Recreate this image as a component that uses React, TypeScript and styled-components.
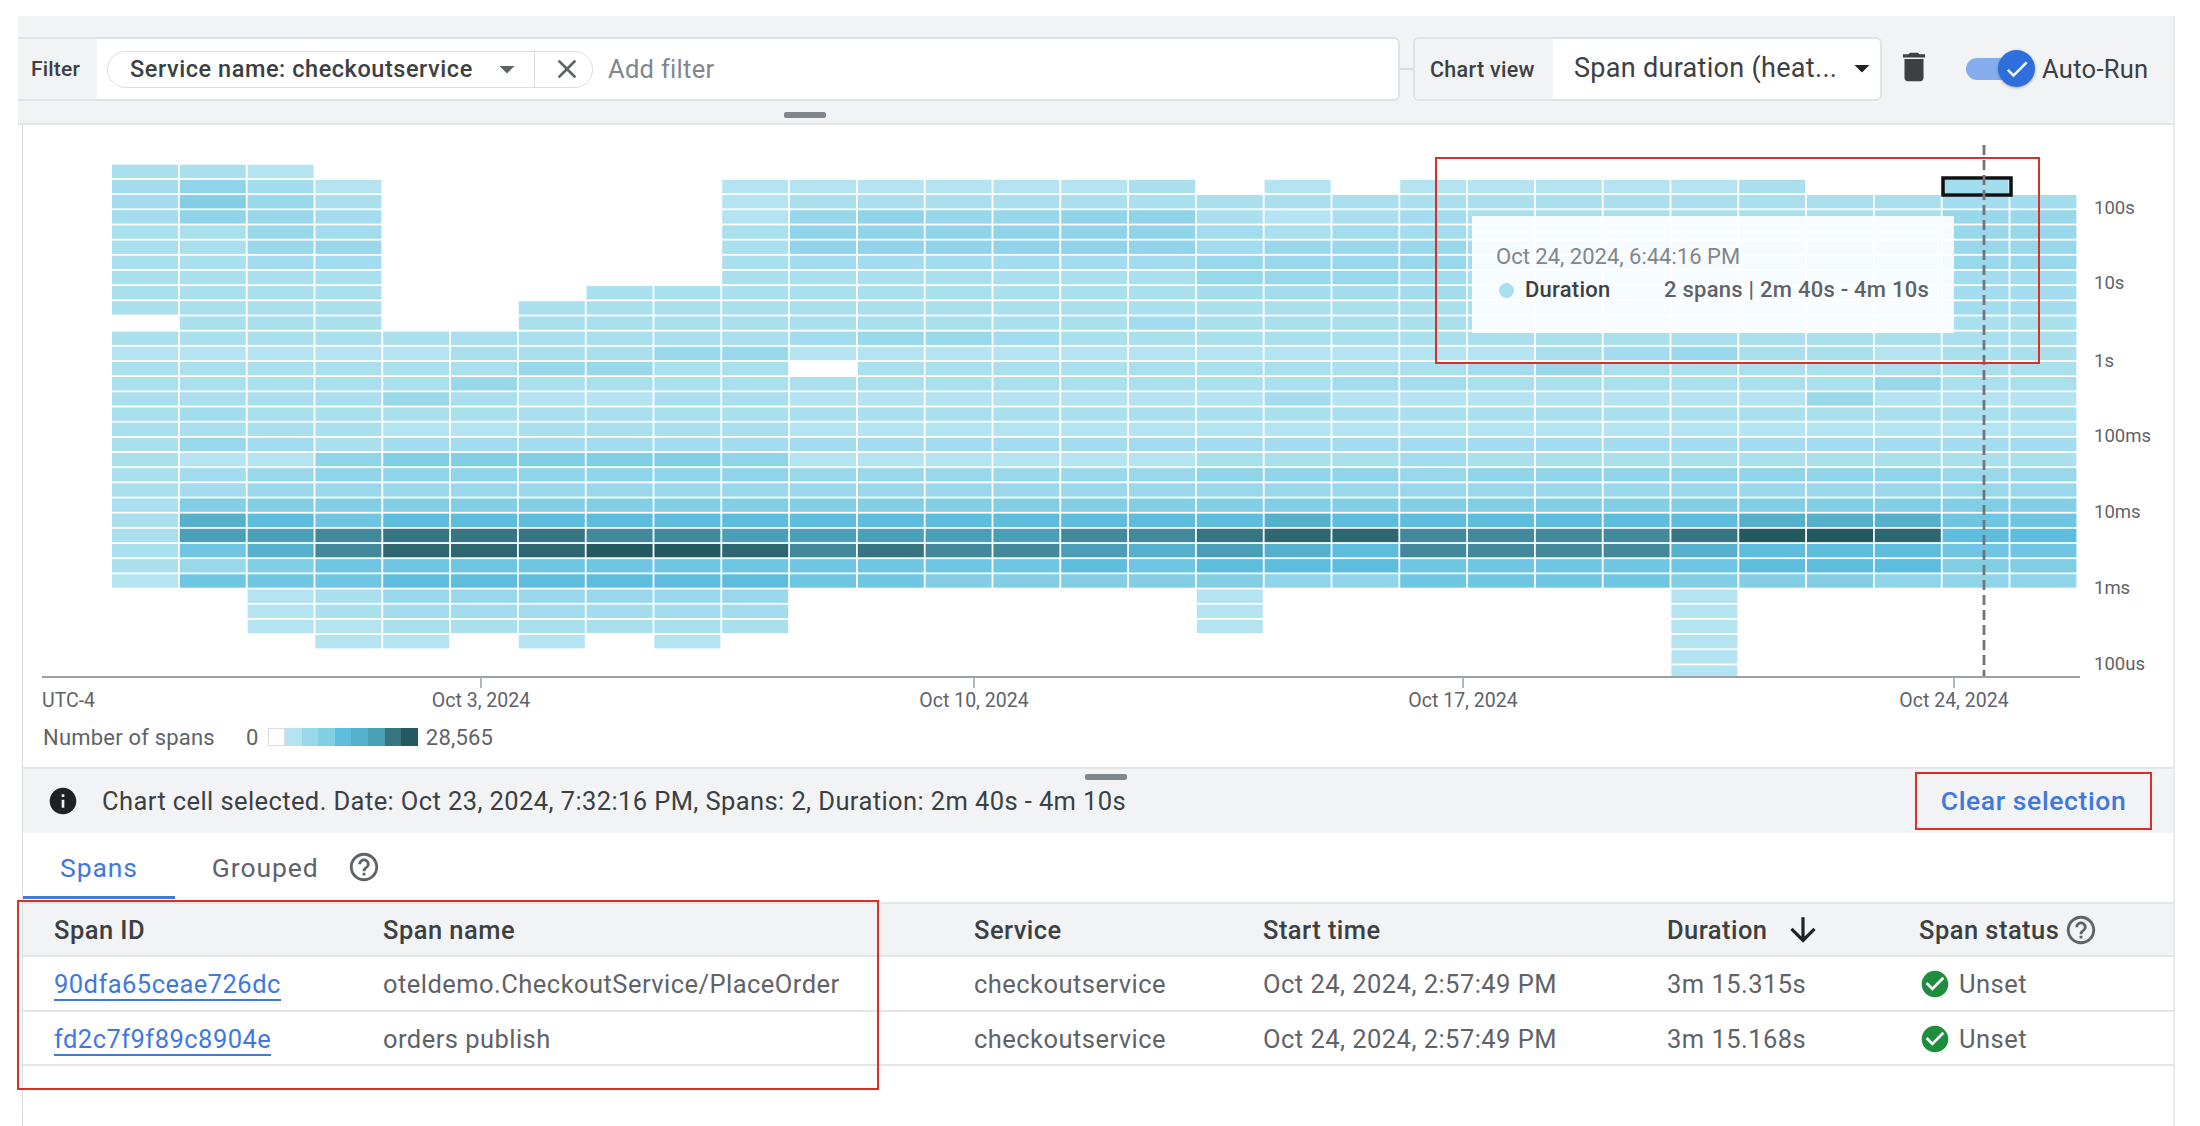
import React from 'react'
import styled, { createGlobalStyle } from 'styled-components'
import {
  MdArrowDownward,
  MdArrowDropDown,
  MdCheck,
  MdCheckCircle,
  MdClose,
  MdDelete,
  MdHelpOutline,
  MdInfo,
} from 'react-icons/md'

const GlobalStyle = createGlobalStyle`
  html, body {
    margin: 0;
    background: #fff;
    overflow: hidden;
  }
  body {
    font-family: Roboto, "Liberation Sans", sans-serif;
    color: #3c4043;
  }
`

const LEVELS = [
  '#b4e3f1', '#aadfee', '#a3dcee', '#99d8eb', '#8fd4e8', '#81cee5', '#6fc6e2',
  '#5ebcdc', '#55b0cc', '#4a9fb6', '#43899c', '#387582', '#2e6772', '#245962',
]

// one string per duration bucket, one char per time bucket, '.' = no spans
// groups are columns 0-9, 10-19, 20-28
const ROWS = [
  '110....... .......... .........',
  '2420.....0 000001.0.0 00001..2.',
  '2531.....0 1111111111 111111122',
  '2432.....0 3433441012 111111133',
  '1132.....1 4444442122 111111133',
  '1133.....1 4444442333 222222233',
  '1122.....1 2222223333 222222233',
  '1111.....1 1111113332 111111122',
  '1111...111 1111112222 111111122',
  '1111..1111 1111111111 111111122',
  '.111..1111 1111121111 111111111',
  '1111111111 2332111111 111111111',
  '0000011133 0000000000 012311011',
  '1111113311 .111111111 231111111',
  '1111131111 1111111122 111111311',
  '1111310011 0000000200 000003000',
  '1211111111 1111111111 111111111',
  '1111001111 0000000000 000000000',
  '1321222222 2222222222 222222222',
  '1004555554 0000001112 111111111',
  '1234444444 3333334443 444444433',
  '1233333333 3333333333 333333333',
  '1555555555 5555555555 555555555',
  '1876777777 7777777877 777788866',
  '199abbbaa9 9999aabcca aaabddc77',
  '168acccddc abaa98987a aaa877766',
  '1356666666 6666767776 666677755',
  '0666777777 6655555446 666555444',
  '..01333333 ......0... ...0.....',
  '..01222222 ......0... ...0.....',
  '..00111111 ......0... ...0.....',
  '...00.0.0. .......... ...0.....',
  '.......... .......... ...0.....',
  '.......... .......... ...0.....',
].map(r => r.replace(/ /g, ''))

const COL_X = 112
const COL_PITCH = 67.8
const ROW_Y = 164.7
const ROW_PITCH = 15.17
const AXIS_Y = 677

const X_TICKS = [
  { x: 481, label: 'Oct 3, 2024' },
  { x: 974, label: 'Oct 10, 2024' },
  { x: 1463, label: 'Oct 17, 2024' },
  { x: 1954, label: 'Oct 24, 2024' },
]
const Y_LABELS = [
  { y: 208, label: '100s' },
  { y: 283, label: '10s' },
  { y: 361, label: '1s' },
  { y: 436, label: '100ms' },
  { y: 512, label: '10ms' },
  { y: 588, label: '1ms' },
  { y: 664, label: '100us' },
]
const LEGEND = ['#fff', '#b4e3f1', '#99d8eb', '#81cee5', '#5ebcdc', '#55b0cc', '#4a9fb6', '#387582', '#245962']

const Page = styled.div`
  width: 2175px;
  height: 1126px;
  padding: 16px 0 0 18px;
  box-sizing: border-box;
  display: flex;
  flex-direction: column;
`

const Toolbar = styled.header`
  height: 109px;
  box-sizing: border-box;
  flex: none;
  background: #f1f3f4;
  border-bottom: 2px solid #e3e5e8;
  border-right: 2px solid #e8eaed;
  padding-top: 21px;
  position: relative;
  display: flex;
  align-items: flex-start;
`

const FilterField = styled.div`
  width: 1382px;
  height: 64px;
  box-sizing: border-box;
  flex: none;
  display: flex;
  align-items: center;
  background: #fff;
  border: solid #e0e2e5;
  border-width: 2px 2px 2px 0;
  border-radius: 0 6px 6px 0;
`

const FieldLabel = styled.div`
  align-self: stretch;
  flex: none;
  display: flex;
  align-items: center;
  box-sizing: border-box;
  background: #f1f3f4;
  font-size: 21px;
  font-weight: 500;
  letter-spacing: 0.2px;
  color: #3c4043;
`

const FilterLabel = styled(FieldLabel)`
  width: 79px;
  padding-left: 13px;
`

const Chip = styled.div`
  margin-left: 10px;
  width: 486px;
  height: 37px;
  box-sizing: border-box;
  flex: none;
  display: flex;
  align-items: center;
  border: 1.5px solid #dadce0;
  border-radius: 19px;
`

const ChipText = styled.span`
  flex: 1;
  padding: 0 9px 0 22px;
  height: 100%;
  display: flex;
  align-items: center;
  justify-content: space-between;
  font-size: 23.5px;
  font-weight: 500;
  letter-spacing: 0.55px;
  color: #3c4043;
  white-space: nowrap;
  border-right: 1.5px solid #dadce0;
`

const ChipClose = styled.span`
  width: 57px;
  padding-left: 6px;
  box-sizing: border-box;
  display: flex;
  justify-content: center;
  color: #5f6368;
`

const AddFilter = styled.span`
  margin-left: 15px;
  font-size: 25.5px;
  letter-spacing: 0.3px;
  color: #80868b;
`

const Connector = styled.div`
  width: 13px;
  height: 2px;
  flex: none;
  margin-top: 31px;
  background: #dadce0;
`

const ChartViewField = styled.div`
  width: 469px;
  height: 64px;
  box-sizing: border-box;
  flex: none;
  display: flex;
  background: #fff;
  border: 2px solid #e0e2e5;
  border-radius: 6px;
  overflow: hidden;
`

const ChartViewLabel = styled(FieldLabel)`
  width: 138px;
  padding-left: 15px;
  font-size: 21.5px;
  letter-spacing: 0.3px;
`

const ChartViewSelect = styled.div`
  flex: 1;
  display: flex;
  align-items: center;
  justify-content: space-between;
  padding: 0 0 2px 21px;
  font-size: 27px;
  letter-spacing: 0.3px;
  color: #3c4043;
  white-space: nowrap;
`

const TrashButton = styled.div`
  flex: none;
  margin: 11px 0 0 13px;
  color: #3c4043;
  display: flex;
`

const AutoRun = styled.div`
  flex: none;
  height: 64px;
  margin-left: 33px;
  display: flex;
  align-items: center;
  font-size: 25.5px;
  letter-spacing: 0.3px;
  color: #3c4043;
`

const ToggleTrack = styled.div`
  position: relative;
  width: 48px;
  height: 22px;
  border-radius: 11px 0 0 11px;
  background: #86aeee;
  margin-right: 28px;
`

const ToggleKnob = styled.div`
  position: absolute;
  left: 32px;
  top: -8px;
  width: 37px;
  height: 37px;
  border-radius: 50%;
  background: #2f6fdd;
  color: #fff;
  display: flex;
  align-items: center;
  justify-content: center;
  box-shadow: 0 1px 3px rgba(60, 64, 67, 0.4);
`

const Handle = styled.div`
  position: absolute;
  width: 42px;
  height: 6px;
  border-radius: 2px;
  background: #80868b;
`

const ToolbarHandle = styled(Handle)`
  left: 766px;
  bottom: 5px;
`

const Body = styled.main`
  flex: 1;
  margin-left: 4px;
  border-left: 1px solid #dadce0;
  border-right: 2px solid #e8eaed;
  display: flex;
  flex-direction: column;
  min-height: 0;
`

const ChartArea = styled.section`
  position: relative;
  flex: none;
  height: 642px;
`

const ChartSvg = styled.svg`
  display: block;
  font-family: Roboto, "Liberation Sans", sans-serif;
`

const Cells = styled.g`
  filter: blur(0.45px);
`

const Legend = styled.div`
  height: 46px;
  padding-left: 20px;
  display: flex;
  align-items: center;
  font-size: 22px;
  letter-spacing: 0.2px;
  color: #5f6368;
`

const LegendZero = styled.span`
  margin: 0 10px 0 31px;
`

const LegendScale = styled.div`
  display: flex;
  margin-right: 8px;
`

const LegendSwatch = styled.div<{ $color: string }>`
  width: 16.6px;
  height: 18px;
  box-sizing: border-box;
  background: ${p => p.$color};
  border: ${p => (p.$color === '#fff' ? '1px solid #dadce0' : 'none')};
`

const Tooltip = styled.div`
  position: absolute;
  left: 1449px;
  top: 91px;
  width: 482px;
  height: 117px;
  box-sizing: border-box;
  padding: 29px 0 0 24px;
  background: rgba(255, 255, 255, 0.9);
  font-size: 22px;
`

const TooltipTime = styled.div`
  color: #80868b;
  line-height: 24px;
`

const TooltipRow = styled.div`
  margin-top: 9px;
  display: flex;
  align-items: center;
  font-weight: 500;
  line-height: 24px;
  letter-spacing: 0.25px;
  color: #5f6368;
`

const TooltipDot = styled.span`
  width: 15px;
  height: 15px;
  border-radius: 50%;
  background: #a8deee;
  margin-right: 11px;
  margin-left: 3px;
`

const TooltipName = styled.span`
  width: 139px;
  color: #3c4043;
`

const RedBox = styled.div`
  position: absolute;
  box-sizing: border-box;
  border: 2px solid #d93025;
  pointer-events: none;
`

const ChartRedBox = styled(RedBox)`
  left: 1412px;
  top: 32px;
  width: 605px;
  height: 207px;
`

const TableRedBox = styled(RedBox)`
  left: -6px;
  top: -2px;
  width: 862px;
  height: 190px;
`

const SelectionBar = styled.div`
  position: relative;
  flex: none;
  height: 66px;
  box-sizing: border-box;
  background: #f1f3f4;
  border-top: 2px solid #e3e5e8;
  padding: 0 21px 0 24px;
  display: flex;
  align-items: center;
  font-size: 25.5px;
  letter-spacing: 0.4px;
  color: #3c4043;
`

const SelectionHandle = styled(Handle)`
  left: 1062px;
  top: 5px;
`

const SelectionIcon = styled.span`
  display: flex;
  color: #202124;
  margin-right: 23px;
`

const ClearButton = styled.div`
  margin-left: auto;
  width: 237px;
  height: 58px;
  box-sizing: border-box;
  padding-bottom: 2px;
  display: flex;
  align-items: center;
  justify-content: center;
  border: 2px solid #d93025;
  color: #3f78e0;
  font-size: 26.5px;
  letter-spacing: 0.6px;
  font-weight: 500;
`

const Tabs = styled.nav`
  flex: none;
  height: 69px;
  display: flex;
  align-items: stretch;
  font-size: 26.5px;
`

const Tab = styled.div<{ $active?: boolean }>`
  display: flex;
  align-items: center;
  justify-content: center;
  box-sizing: border-box;
  letter-spacing: 0.9px;
  padding: 5px 37px 0;
  gap: 28px;
  color: ${p => (p.$active ? '#3f78e0' : '#5f6368')};
  border-bottom: 3px solid ${p => (p.$active ? '#3f78e0' : 'transparent')};
  margin-bottom: 3px;
`

const HelpIcon = styled.span`
  display: inline-flex;
  color: #5f6368;
`

const HeadHelp = styled(HelpIcon)`
  margin-left: 5px;
`

const Table = styled.section`
  position: relative;
  flex: none;
`

const Row = styled.div`
  display: grid;
  grid-template-columns: 360px 591px 289px 404px 252px 1fr;
  align-items: center;
  height: 54.6px;
  box-sizing: border-box;
  padding-top: 2px;
  border-bottom: 2px solid #e3e5e8;
  font-size: 25.5px;
  letter-spacing: 0.46px;
  color: #5f6368;
`

const HeadRow = styled(Row)`
  height: 55px;
  padding-top: 0;
  border-top: 2px solid #e3e5e8;
  background: #f1f3f4;
  color: #3c4043;
  font-weight: 500;
`

const Cell = styled.div`
  display: flex;
  align-items: center;
  white-space: nowrap;
  &:first-child {
    padding-left: 31px;
  }
`

const SpanLink = styled.a`
  color: #3f78e0;
  text-decoration: none;
  border-bottom: 2px solid #3f78e0;
  line-height: 29px;
  margin-top: 3px;
`

const SortArrow = styled.span`
  display: flex;
  color: #202124;
  margin-left: 17px;
`

const StatusIcon = styled.span`
  display: flex;
  color: #1e8e3e;
  margin: 0 8px 0 0;
`

const spans = [
  { id: '90dfa65ceae726dc', name: 'oteldemo.CheckoutService/PlaceOrder', duration: '3m 15.315s' },
  { id: 'fd2c7f9f89c8904e', name: 'orders publish', duration: '3m 15.168s' },
]

const Heatmap = () => (
  <ChartSvg width={2151} height={589} viewBox="23 125 2151 589">
    <Cells>
      {ROWS.map((row, r) =>
        row.split('').map((ch, c) => {
          if (ch === '.') return null
          const y = ROW_Y + r * ROW_PITCH
          return (
            <rect
              key={`${r}-${c}`}
              x={COL_X + c * COL_PITCH}
              y={y}
              width={COL_PITCH - 1.8}
              height={Math.min(ROW_PITCH - 1.8, AXIS_Y - y)}
              fill={LEVELS[parseInt(ch, 16)]}
            />
          )
        })
      )}
    </Cells>
    <rect x={1943} y={178} width={68} height={17} fill="none" stroke="#111" strokeWidth={3.5} />
    <line x1={1984} y1={145} x2={1984} y2={AXIS_Y} stroke="#70757a" strokeWidth={2.8} strokeDasharray="10 5" />
    <line x1={42} y1={AXIS_Y} x2={2080} y2={AXIS_Y} stroke="#9aa0a6" strokeWidth={2} />
    <text x={42} y={707} fontSize={19.5} fill="#5f6368">UTC-4</text>
    {X_TICKS.map(t => (
      <g key={t.label}>
        <line x1={t.x} y1={AXIS_Y} x2={t.x} y2={688} stroke="#9aa0a6" strokeWidth={1.5} />
        <text x={t.x} y={707} fontSize={19.5} fill="#5f6368" textAnchor="middle">{t.label}</text>
      </g>
    ))}
    {Y_LABELS.map(t => (
      <text key={t.label} x={2094} y={t.y + 6} fontSize={18.5} fill="#5f6368">{t.label}</text>
    ))}
  </ChartSvg>
)

export default function App() {
  return (
    <Page>
      <GlobalStyle />
      <Toolbar>
        <FilterField>
          <FilterLabel>Filter</FilterLabel>
          <Chip>
            <ChipText>
              Service name: checkoutservice
              <MdArrowDropDown size={36} color="#5f6368" />
            </ChipText>
            <ChipClose><MdClose size={32} /></ChipClose>
          </Chip>
          <AddFilter>Add filter</AddFilter>
        </FilterField>
        <Connector />
        <ChartViewField>
          <ChartViewLabel>Chart view</ChartViewLabel>
          <ChartViewSelect>
            Span duration (heat...
            <MdArrowDropDown size={36} color="#202124" />
          </ChartViewSelect>
        </ChartViewField>
        <TrashButton><MdDelete size={38} /></TrashButton>
        <AutoRun>
          <ToggleTrack>
            <ToggleKnob><MdCheck size={28} /></ToggleKnob>
          </ToggleTrack>
          Auto-Run
        </AutoRun>
        <ToolbarHandle />
      </Toolbar>
      <Body>
        <ChartArea>
          <Heatmap />
          <Legend>
            Number of spans
            <LegendZero>0</LegendZero>
            <LegendScale>
              {LEGEND.map(c => <LegendSwatch key={c} $color={c} />)}
            </LegendScale>
            28,565
          </Legend>
          <Tooltip>
            <TooltipTime>Oct 24, 2024, 6:44:16 PM</TooltipTime>
            <TooltipRow>
              <TooltipDot />
              <TooltipName>Duration</TooltipName>
              2 spans | 2m 40s - 4m 10s
            </TooltipRow>
          </Tooltip>
          <ChartRedBox />
        </ChartArea>
        <SelectionBar>
          <SelectionHandle />
          <SelectionIcon><MdInfo size={32} /></SelectionIcon>
          Chart cell selected. Date: Oct 23, 2024, 7:32:16 PM, Spans: 2, Duration: 2m 40s - 4m 10s
          <ClearButton>Clear selection</ClearButton>
        </SelectionBar>
        <Tabs>
          <Tab $active>Spans</Tab>
          <Tab>
            Grouped
            <HelpIcon><MdHelpOutline size={34} /></HelpIcon>
          </Tab>
        </Tabs>
        <Table>
          <HeadRow>
            <Cell>Span ID</Cell>
            <Cell>Span name</Cell>
            <Cell>Service</Cell>
            <Cell>Start time</Cell>
            <Cell>Duration<SortArrow><MdArrowDownward size={38} /></SortArrow></Cell>
            <Cell>Span status<HeadHelp><MdHelpOutline size={34} /></HeadHelp></Cell>
          </HeadRow>
          {spans.map(s => (
            <Row key={s.id}>
              <Cell><SpanLink>{s.id}</SpanLink></Cell>
              <Cell>{s.name}</Cell>
              <Cell>checkoutservice</Cell>
              <Cell>Oct 24, 2024, 2:57:49 PM</Cell>
              <Cell>{s.duration}</Cell>
              <Cell><StatusIcon><MdCheckCircle size={32} /></StatusIcon>Unset</Cell>
            </Row>
          ))}
          <TableRedBox />
        </Table>
      </Body>
    </Page>
  )
}
